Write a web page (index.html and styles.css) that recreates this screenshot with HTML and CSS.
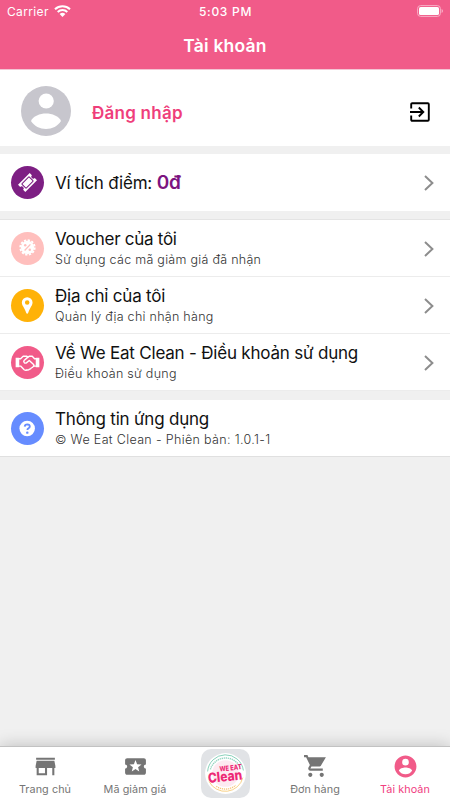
FILE: index.html
```
<!DOCTYPE html>
<html lang="vi">
<head>
    <meta charset="UTF-8">
    <meta name="viewport" content="width=device-width, initial-scale=1.0">
    <title>Tài khoản</title>
    <link rel="stylesheet" href="styles.css">
</head>
<body>
    <div class="app">
        <header class="header">
            <div class="status-bar">
                <div class="carrier">
                    <span class="carrier-name">Carrier</span>
                    <svg class="wifi" viewBox="0 0 17 12">
                        <path d="M1 4.2a10.8 10.8 0 0 1 15 0M3.7 7a6.9 6.9 0 0 1 9.6 0" fill="none" stroke="#fff" stroke-width="2"/>
                        <path d="M8.5 12L5.6 9.1a4.1 4.1 0 0 1 5.8 0z" fill="#fff"/>
                    </svg>
                </div>
                <span class="time">5:03 PM</span>
                <svg class="battery" viewBox="0 0 27 12">
                    <rect x=".6" y=".6" width="22.8" height="10.8" rx="3" fill="none" stroke="#f8b0c7" stroke-width="1"/>
                    <rect x="2" y="2" width="20" height="8" rx="1.6" fill="#fff"/>
                    <path d="M24.6 4v4q1.4-.6 1.4-2t-1.4-2z" fill="#f8b0c7"/>
                </svg>
            </div>
            <h1>Tài khoản</h1>
        </header>

        <!-- Đăng nhập -->
        <section class="profile">
            <svg class="avatar" viewBox="0 0 50 50">
                <circle cx="25" cy="25" r="25" fill="#c7c6cd"/>
                <circle cx="25.2" cy="15" r="7.6" fill="#fff"/>
                <path d="M10 35c2-5 9-7.500 15-7.500S38 30 40 35c-3 5-9 8-15 8s-12-3-15-8z" fill="#fff"/>
            </svg>
            <a class="login">Đăng nhập</a>
            <svg class="enter" viewBox="0 0 20 20">
                <path d="M1.2 6.500V2.200a1 1 0 0 1 1-1h15.600a1 1 0 0 1 1 1v15.600a1 1 0 0 1-1 1H2.200a1 1 0 0 1-1-1v-4.300M0 10h13M8.800 5.500l4.500 4.500-4.500 4.500" fill="none" stroke="#000" stroke-width="1.9"/>
            </svg>
        </section>

        <section class="group wallet">
            <div class="row">
                <div class="icon purple">
                    <svg viewBox="0 0 32 32">
                        <g transform="translate(16 16) rotate(-45)">
                            <path fill="#fff" d="M-8-5H8v3a2 2 0 0 0 0 4v3H-8V2a2 2 0 0 0 0-4z"/>
                            <rect x="-5" y="-3" width="10" height="6" rx=".6" fill="none" stroke="#7d1f83"/>
                        </g>
                    </svg>
                </div>
                <div class="title wallet-title">Ví tích điểm: <b>0đ</b></div>
                <svg class="chevron" viewBox="0 0 10 16"><path d="M1 1l7.4 7L1 15"/></svg>
            </div>
        </section>

        <section class="group menu">
            <div class="row">
                <div class="icon salmon">
                    <svg viewBox="0 0 32 32">
                        <circle cx="16" cy="15" r="6.4" fill="#fff"/>
                        <circle cx="16" cy="15" r="7" fill="none" stroke="#fff" stroke-width="1.8" stroke-dasharray="2.2 1.465"/>
                        <path d="M13.2 18l5.6-6" stroke="#ffbfbd" stroke-width="1.3"/>
                        <circle cx="13.8" cy="12.8" r="1.2" fill="#ffbfbd"/>
                        <circle cx="18.2" cy="17.2" r="1.2" fill="#ffbfbd"/>
                    </svg>
                </div>
                <div class="text">
                    <div class="title tight">Voucher của tôi</div>
                    <div class="sub">Sử dụng các mã giảm giá đã nhận</div>
                </div>
                <svg class="chevron" viewBox="0 0 10 16"><path d="M1 1l7.4 7L1 15"/></svg>
            </div>
            <div class="row">
                <div class="icon orange">
                    <svg viewBox="0 0 32 32">
                        <path fill="#fff" fill-rule="evenodd" d="M15.7 8a5.2 5.2 0 0 0-5.2 5.2c0 2.3 1.2 3.4 2.4 5.6.8 1.4 1.4 3 1.9 4.4.3 1 1.5 1 1.8 0 .5-1.4 1.1-3 1.9-4.4 1.2-2.2 2.4-3.3 2.4-5.6A5.2 5.2 0 0 0 15.7 8zm0 2.9a2.2 2.2 0 1 1 0 4.4 2.2 2.2 0 0 1 0-4.4z"/>
                    </svg>
                </div>
                <div class="text">
                    <div class="title">Địa chỉ của tôi</div>
                    <div class="sub">Quản lý địa chỉ nhận hàng</div>
                </div>
                <svg class="chevron" viewBox="0 0 10 16"><path d="M1 1l7.4 7L1 15"/></svg>
            </div>
            <div class="row">
                <div class="icon pink">
                    <svg viewBox="0 0 32 32">
                        <path fill="#fff" d="M4.5 11.500H8v9H4.500zM24 11.500h3.500v9H24z"/>
                        <g fill="none" stroke="#fff" stroke-width="1.4" stroke-linejoin="round" stroke-linecap="round">
                            <path d="M8 12.300h1.300l2.500-2.300h3.600l1 .7 1.200-.7h3l2.200 2.300H24M8 19.500h1.300l3.500 3.500q1.400 1 2.600.1 1.400.6 2.400-.6 1.500.1 2-1.300 1.400-.1 1.900-1.700H24"/>
                            <path d="M16.400 10.800l-3.700 3.200q-.8 1.300.3 2.300 1.100.7 2.200-.2l2.500-2.100 4.200 3.900q.8 1 0 1.700"/>
                        </g>
                    </svg>
                </div>
                <div class="text">
                    <div class="title">Về We Eat Clean - Điều khoản sử dụng</div>
                    <div class="sub">Điều khoản sử dụng</div>
                </div>
                <svg class="chevron" viewBox="0 0 10 16"><path d="M1 1l7.4 7L1 15"/></svg>
            </div>
        </section>

        <section class="group info">
            <div class="row">
                <div class="icon blue">
                    <svg viewBox="0 0 32 32">
                        <circle cx="15.7" cy="16" r="7.5" fill="#fff"/>
                        <path d="M13.3 14.200q.2-2.200 2.500-2.200 2.400.1 2.400 2 0 1.200-1.200 1.800-1.100.6-1.100 1.600" fill="none" stroke="#668cff" stroke-width="1.8"/>
                        <circle cx="15.8" cy="20" r="1.2" fill="#668cff"/>
                    </svg>
                </div>
                <div class="text">
                    <div class="title">Thông tin ứng dụng</div>
                    <div class="sub version">© We Eat Clean - Phiên bản: 1.0.1-1</div>
                </div>
            </div>
        </section>

        <!-- Thanh điều hướng -->
        <nav class="tabs">
            <div class="tab">
                <svg viewBox="0 0 24 24"><path d="M21 3.500H3v2h18zm.5 10v-2l-1-5h-17l-1 5v2h1v7h10v-7h5v7h2v-7zm-10 5h-6v-5h6z"/></svg>
                <span>Trang chủ</span>
            </div>
            <div class="tab">
                <svg viewBox="0 0 24 24"><path d="M20 12c0-1.100.9-2 2-2V6c0-1.100-.9-2-2-2H4c-1.100 0-1.990.9-1.990 2v4c1.100 0 1.990.9 1.990 2s-.89 2-2 2v4c0 1.100.9 2 2 2h16c1.100 0 2-.9 2-2v-4c-1.100 0-2-.9-2-2zm-4.420 4.800L12 14.500l-3.580 2.300 1.080-4.120-3.290-2.690 4.240-.25L12 5.800l1.540 3.950 4.240.25-3.290 2.690 1.090 4.110z"/></svg>
                <span>Mã giảm giá</span>
            </div>
            <div class="tab">
                <svg class="logo" viewBox="0 0 48 48">
                    <rect width="48" height="48" rx="10" fill="#e1e3e6"/>
                    <circle cx="24" cy="24" r="20" fill="#fff"/>
                    <circle cx="24" cy="24" r="13" fill="#fdeaf1"/>
                    <path d="M6.500 22a17.600 17.600 0 0 1 35-1" fill="none" stroke="#49b896" stroke-width=".8" opacity=".8"/>
                    <path d="M9.200 20a15.500 15.500 0 0 1 29.600-.6" fill="none" stroke="#49b896" stroke-width="1.4" stroke-dasharray="1.3 .7" opacity=".6"/>
                    <path d="M8 32a17.800 17.800 0 0 0 33-4" fill="none" stroke="#f7c66c" stroke-width=".8"/>
                    <path d="M15 36.500a15.500 15.500 0 0 0 19-1" fill="none" stroke="#f5ab43" stroke-width="1.3" stroke-dasharray="1.2 .8" opacity=".7"/>
                    <g transform="rotate(-6 24 24)" class="logo-text">
                        <text x="18.500" y="21.500" font-size="7" textLength="22" lengthAdjust="spacingAndGlyphs">WE EAT</text>
                        <text x="6.500" y="31.500" font-size="13.500" textLength="33.500" lengthAdjust="spacingAndGlyphs">Clean</text>
                    </g>
                </svg>
            </div>
            <div class="tab">
                <svg viewBox="0 0 24 24"><path d="M7 18c-1.100 0-1.990.9-1.990 2S5.900 22 7 22s2-.9 2-2-.9-2-2-2zM1 1v2h2l3.600 7.590-1.350 2.450c-.16.28-.25.61-.25.960 0 1.100.9 2 2 2h12v-2H7.420c-.14 0-.25-.11-.25-.25l.03-.12.9-1.630h7.450c.75 0 1.410-.41 1.750-1.030L22 3H5.210l-.94-2H1zm17 17c-1.100 0-1.990.9-1.990 2s.89 2 1.990 2 2-.9 2-2-.9-2-2-2z"/></svg>
                <span>Đơn hàng</span>
            </div>
            <div class="tab active">
                <svg viewBox="0 0 24 24"><path d="M12 1.500C6.200 1.500 1.500 6.200 1.500 12S6.200 22.500 12 22.500 22.500 17.800 22.500 12 17.800 1.500 12 1.500zm0 3.100a3.200 3.200 0 1 1 0 6.400 3.200 3.200 0 0 1 0-6.400zm0 14.900a7.600 7.600 0 0 1-6.300-3.400c0-2.100 4.200-3.200 6.300-3.200s6.300 1.100 6.300 3.200a7.600 7.600 0 0 1-6.300 3.400z"/></svg>
                <span>Tài khoản</span>
            </div>
        </nav>
    </div>
</body>
</html>
```
FILE: styles.css
```
* {
    margin: 0;
    padding: 0;
    box-sizing: border-box;
}

body {
    background-color: #f0f0f0;
    font-family: Inter, "Liberation Sans", sans-serif;
    color: #111;
}

.app {
    height: 800px;
    display: flex;
    flex-direction: column;
    overflow: hidden;
}

svg {
    display: block;
    flex: none;
}

.header {
    height: 70px;
    background-color: #f15b89;
    border-bottom: 1px solid #f4c5d4;
    color: #fff;
}

.status-bar {
    height: 22px;
    padding: 0 6px 0 7px;
    display: grid;
    grid-template-columns: 1fr auto 1fr;
    align-items: center;
}

.carrier {
    display: flex;
    align-items: center;
    gap: 5px;
}

.carrier-name {
    font-size: 12px;
    letter-spacing: 0.35px;
}

.wifi {
    width: 17px;
    height: 12px;
}

.time {
    font-size: 12px;
    font-weight: 500;
    letter-spacing: 0.7px;
}

.battery {
    width: 27px;
    height: 12px;
    justify-self: end;
}

h1 {
    margin-top: 13px;
    font-size: 17.5px;
    line-height: 22px;
    font-weight: 600;
    letter-spacing: 0.2px;
    text-align: center;
}

.profile {
    height: 76px;
    padding: 5px 20px 0 21px;
    background-color: #fff;
    display: flex;
    align-items: center;
}

.avatar {
    width: 50px;
    height: 50px;
}

.login {
    margin: 5px 0 0 21px;
    flex: 1;
    font-size: 17px;
    font-weight: 600;
    letter-spacing: 0.25px;
    color: #ef3e7b;
}

.enter {
    width: 20px;
    height: 20px;
    margin-top: 2px;
}

.group {
    background-color: #fff;
}

.row {
    height: 57px;
    padding: 0 16px 0 11px;
    display: flex;
    align-items: center;
}

.wallet {
    margin-top: 8px;
}

.menu {
    margin-top: 8px;
    border-top: 1px solid #e4e4e4;
}

.menu .row {
    border-bottom: 1px solid #ececec;
}

.info {
    margin-top: 9px;
    border-bottom: 1px solid #e0e0e0;
}

.info .row {
    height: 56px;
}

.icon {
    width: 33px;
    height: 33px;
    margin-right: 11px;
    border-radius: 50%;
}

.icon svg {
    width: 33px;
    height: 33px;
}

.purple { background-color: #7d1f83; }
.salmon { background-color: #ffbfbd; }
.orange { background-color: #ffb208; }
.pink { background-color: #f15b89; }
.blue { background-color: #668cff; }

.text {
    flex: 1;
}

.title {
    font-size: 17px;
    line-height: 22px;
    letter-spacing: -0.2px;
    white-space: nowrap;
}

.tight {
    letter-spacing: -0.27px;
}

.wallet-title {
    flex: 1;
    padding-top: 1px;
}

.wallet-title b {
    font-size: 19px;
    font-weight: 600;
    color: #7d1380;
}

.sub {
    font-size: 12.5px;
    line-height: 19px;
    font-weight: 300;
    letter-spacing: 0.28px;
    color: #333;
    white-space: nowrap;
}

.version {
    letter-spacing: 0.34px;
}

.chevron {
    width: 10px;
    height: 16px;
    margin-top: 1px;
}

.chevron path {
    fill: none;
    stroke: #8d8d8d;
    stroke-width: 2;
}

.tabs {
    height: 54px;
    margin-top: auto;
    background-color: #fff;
    border-top: 1px solid #c2c2c2;
    box-shadow: 0 0 16px rgba(0, 0, 0, 0.22);
    display: grid;
    grid-template-columns: repeat(5, 1fr);
}

.tab {
    padding-top: 7px;
    display: flex;
    flex-direction: column;
    align-items: center;
    font-size: 10.8px;
    line-height: 15px;
    letter-spacing: 0.08px;
    color: #757575;
    fill: #757575;
    white-space: nowrap;
}

.tab svg {
    width: 25px;
    height: 25px;
    margin-bottom: 3px;
}

.tab.active {
    color: #f1407f;
    fill: #f15b89;
}

.tab .logo {
    width: 49px;
    height: 49px;
    margin-top: -5px;
}

.logo-text {
    fill: #ed2875;
    font-weight: 800;
    letter-spacing: 0;
}
```
